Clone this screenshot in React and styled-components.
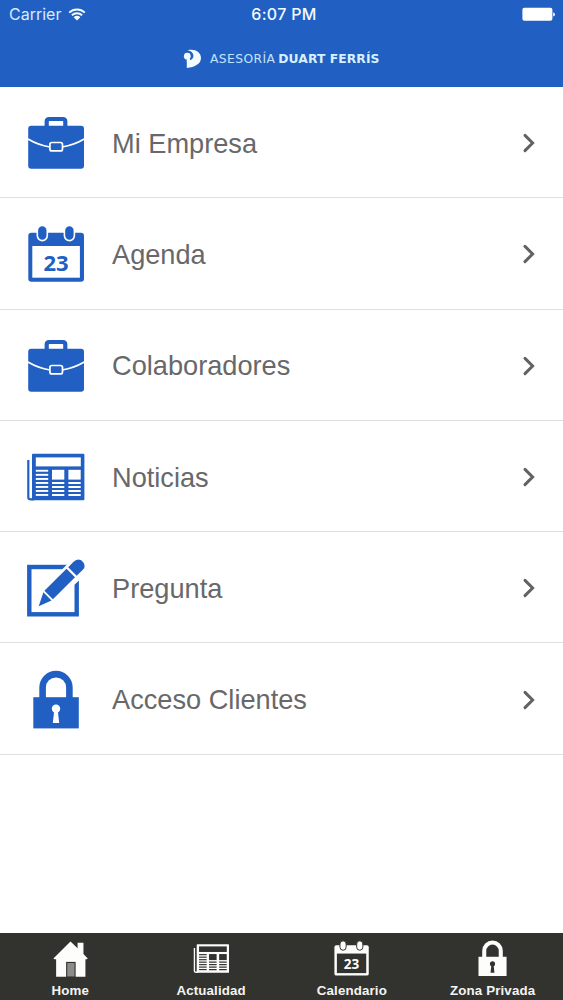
import React from 'react';
import styled, { createGlobalStyle } from 'styled-components';

const BLUE = '#2160c2';
const DARK = '#32332f';

const BriefcaseIcon = ({ size, color, back }) => (
	<svg width={size} height={size} viewBox='0 0 60 60' fill='none'>
		<path
			d='M20.7 14V8.5Q20.7 6 23.2 6H36.8Q39.3 6 39.3 8.5V14'
			stroke={color}
			strokeWidth='4.2'
		/>
		<rect x='2.2' y='12.7' width='55.8' height='43' rx='3' fill={color} />
		<path
			d='M2 26Q12 32 24 34M36 34Q48 32 58.3 26'
			stroke={back}
			strokeWidth='1.7'
		/>
		<rect
			x='23.9'
			y='29.5'
			width='12.6'
			height='8.4'
			rx='2'
			fill={color}
			stroke={back}
			strokeWidth='1.7'
		/>
	</svg>
);

const CalendarIcon = ({ size, color, back }) => (
	<svg width={size} height={size} viewBox='0 0 60 60'>
		<rect x='2.3' y='8.7' width='55.7' height='49' rx='3' fill={color} />
		<rect x='6.3' y='22' width='47.6' height='31.7' fill={back} />
		{[16.3, 43.4].map((x) => (
			<rect
				key={x}
				x={x - 5}
				y='1.4'
				width='10'
				height='15.2'
				rx='5'
				fill={color}
				stroke={back}
				strokeWidth='1.6'
			/>
		))}
		<DayNumber x='30' y='47.2' fill={color}>
			23
		</DayNumber>
	</svg>
);

const NewsIcon = ({ size, color, back }) => (
	<svg width={size} height={size} viewBox='0 0 60 60'>
		<path
			d='M2.3 13V50.5Q2.3 52.3 5 52.3H8'
			fill='none'
			stroke={color}
			strokeWidth='2.2'
		/>
		<rect x='6' y='6.7' width='52.4' height='46.6' rx='1' fill={color} />
		<rect x='9.8' y='10.4' width='45' height='9' fill={back} />
		<rect x='26' y='22.8' width='12.3' height='9.8' fill={back} />
		<rect x='42.4' y='22.8' width='12.3' height='9.8' fill={back} />
		{[22.8, 26.9, 31, 35, 39, 43, 47].map((y) => (
			<rect key={y} x='9.8' y={y} width='12.4' height='1.9' fill={back} />
		))}
		{[35, 39, 43, 47].map((y) => (
			<path
				key={y}
				d={`M26 ${y}h12.3v1.9h-12.3zM42.4 ${y}h12.3v1.9h-12.3z`}
				fill={back}
			/>
		))}
	</svg>
);

const PencilIcon = ({ size, color, back }) => (
	<svg width={size} height={size} viewBox='0 0 60 60'>
		<rect
			x='3.3'
			y='9'
			width='47.4'
			height='47.3'
			fill='none'
			stroke={color}
			strokeWidth='4.4'
		/>
		<path d='M9.5 51L15.5 32L45 2.5H60V16L28.5 45.2Z' fill={back} />
		<path d='M12.7 48.2L17.4 34.3L25.5 42.4Z' fill={color} />
		<path d='M18.4 32.8L40.5 10.7L49 19.2L26.9 41.3Z' fill={color} />
		<path
			d='M42.2 9.2L47.3 4.1Q49.5 1.6 52.5 1.6A6.4 6.4 0 0 1 58.2 10Q57.6 11.3 55.8 12.8L50.7 17.7Z'
			fill={color}
		/>
	</svg>
);

const LockIcon = ({ size, color, back }) => (
	<svg width={size} height={size} viewBox='0 0 60 60'>
		<path
			d='M16.6 29V17.5A13.4 13.4 0 0 1 43.4 17.5V29'
			fill='none'
			stroke={color}
			strokeWidth='6.6'
		/>
		<rect x='7.3' y='27.2' width='45.5' height='31.2' fill={color} />
		<circle cx='30' cy='38.7' r='4.2' fill={back} />
		<path d='M28.3 40H31.7L33.2 53H26.8Z' fill={back} />
	</svg>
);

const HomeIcon = ({ size, color, back }) => (
	<svg width={size} height={size} viewBox='0 0 60 60'>
		<path
			d='M30 2.3L41.5 13.5V4.4H51V22.6L58 29.8L56.5 31.3H54.2V59.5H6.7V31.3H4L2.3 29.8Z'
			fill={color}
		/>
		<rect
			x='23.8'
			y='36.4'
			width='13.6'
			height='23.6'
			fill='#8b8b8b'
			stroke={back}
			strokeWidth='1.8'
		/>
	</svg>
);

const WifiIcon = () => (
	<svg width='18' height='13' viewBox='0 0 18 13' fill='none'>
		<path
			d='M1.2 4.6A11.2 11.2 0 0 1 16.8 4.6M3.9 7.3A7.4 7.4 0 0 1 14.1 7.3'
			stroke='#f4fbff'
			strokeWidth='1.9'
		/>
		<path d='M9 12.6L5.6 9.2A4.9 4.9 0 0 1 12.4 9.2Z' fill='#f4fbff' />
	</svg>
);

const BatteryIcon = () => (
	<svg width='33' height='15' viewBox='0 0 33 15' fill='#fff'>
		<rect x='0.4' y='0.8' width='30' height='13' rx='2' />
		<path d='M31.2 5.2Q33 6 33 7.4T31.2 9.6Z' />
	</svg>
);

const LogoIcon = () => (
	<svg width='19' height='20' viewBox='0 0 19 20' fill='#f2fbff'>
		<path d='M4.5 1.2C11.5 -0.6 18 2.8 18 9C18 14.8 12 18.2 3.8 19V11.4C7.8 11.8 10.6 9.6 10.4 6.4C10.2 3.4 7.6 1.8 4.5 1.2Z' />
		<circle cx='4.3' cy='7.2' r='3.4' />
		<path d='M3.8 10H7V13H3.8Z' />
	</svg>
);

const ChevronIcon = () => (
	<svg width='14' height='20' viewBox='0 0 14 20' fill='none'>
		<path
			d='M3 2.4L10.6 10L3 17.6'
			stroke='#626264'
			strokeWidth='3'
			strokeLinecap='round'
		/>
	</svg>
);

const menu = [
	{ title: 'Mi Empresa', Icon: BriefcaseIcon },
	{ title: 'Agenda', Icon: CalendarIcon },
	{ title: 'Colaboradores', Icon: BriefcaseIcon },
	{ title: 'Noticias', Icon: NewsIcon },
	{ title: 'Pregunta', Icon: PencilIcon },
	{ title: 'Acceso Clientes', Icon: LockIcon },
];

const tabs = [
	{ title: 'Home', Icon: HomeIcon },
	{ title: 'Actualidad', Icon: NewsIcon },
	{ title: 'Calendario', Icon: CalendarIcon },
	{ title: 'Zona Privada', Icon: LockIcon },
];

const App = () => {
	return (
		<Screen>
			<GlobalStyle />
			<Header>
				<StatusBar>
					<Carrier>
						Carrier
						<WifiIcon />
					</Carrier>
					<Clock>6:07 PM</Clock>
					<Battery>
						<BatteryIcon />
					</Battery>
				</StatusBar>
				<Brand>
					<LogoIcon />
					<BrandLight>ASESORÍA</BrandLight>
					<BrandBold>DUART FERRÍS</BrandBold>
				</Brand>
			</Header>
			<Menu>
				{menu.map(({ title, Icon }) => (
					<MenuRow key={title}>
						<Icon size={60} color={BLUE} back='#fff' />
						<MenuTitle>{title}</MenuTitle>
						<ChevronIcon />
					</MenuRow>
				))}
			</Menu>
			<TabBar>
				{tabs.map(({ title, Icon }) => (
					<Tab key={title}>
						<Icon size={37} color='#fdfdfc' back={DARK} />
						<TabTitle>{title}</TabTitle>
					</Tab>
				))}
			</TabBar>
		</Screen>
	);
};

export default App;

const GlobalStyle = createGlobalStyle`
	* {
		box-sizing: border-box;
	}

	body {
		margin: 0;
		background-color: #fff;
		font-family: 'Liberation Sans', Arial, sans-serif;
	}

	svg {
		display: block;
		flex: none;
	}
`;

const Screen = styled.div`
	display: flex;
	flex-direction: column;
	height: 1000px;
`;

const Header = styled.header`
	height: 87px;
	background-color: ${BLUE};
	color: #f2fbff;
`;

const StatusBar = styled.div`
	display: grid;
	grid-template-columns: 1fr auto 1fr;
	align-items: center;
	height: 28px;
	padding: 0 8px 0 9px;
	font-family: Inter, sans-serif;
	font-size: 16px;
`;

const Carrier = styled.div`
	display: flex;
	align-items: center;
	gap: 7px;
	color: #d9eaff;
`;

const Clock = styled.div`
	padding-left: 4px;
	font-weight: 500;
	letter-spacing: 0.3px;
`;

const Battery = styled.div`
	justify-self: end;
`;

const Brand = styled.div`
	display: flex;
	align-items: center;
	height: 61px;
	padding-left: 183px;
	font-family: 'DejaVu Sans', Verdana, sans-serif;
	font-size: 12.3px;
	white-space: nowrap;
`;

const BrandLight = styled.span`
	margin-left: 8px;
	color: #c4e2fc;
	letter-spacing: 0.4px;
`;

const BrandBold = styled.span`
	margin-left: 3px;
	font-weight: 700;
	letter-spacing: 0.1px;
	color: #d6f0ff;
`;

const Menu = styled.main`
	flex: 1;
`;

const MenuRow = styled.div`
	display: flex;
	align-items: center;
	height: 111.3px;
	padding: 2px 27px 0 26px;
	border-bottom: 1px solid #dfdfe1;
`;

const MenuTitle = styled.span`
	flex: 1;
	margin-left: 26px;
	padding-top: 1px;
	font-size: 27.2px;
	line-height: 32px;
	color: #68686a;
`;

const TabBar = styled.nav`
	display: grid;
	grid-template-columns: repeat(4, 1fr);
	height: 67px;
	background-color: ${DARK};
`;

const Tab = styled.div`
	display: flex;
	flex-direction: column;
	align-items: center;
	padding-top: 7px;
`;

const TabTitle = styled.span`
	margin-top: 6px;
	font-size: 13.3px;
	line-height: 16px;
	font-weight: 700;
	letter-spacing: 0.15px;
	color: #f4f4f2;
	white-space: nowrap;
`;

const DayNumber = styled.text`
	font-family: 'Open Sans', sans-serif;
	font-size: 22px;
	font-weight: 700;
	text-anchor: middle;
`;
